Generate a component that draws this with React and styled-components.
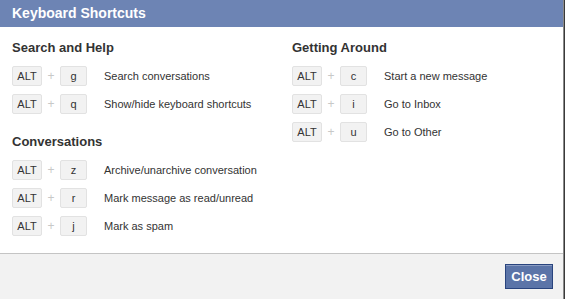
import React from "react";
import styled, { createGlobalStyle } from "styled-components";

const Global = createGlobalStyle`
  html, body { margin: 0; padding: 0; background: #3a3a3a; }
  body { font-family: "Liberation Sans", Arial, sans-serif; }
`;

const Page = styled.div`
  width: 565px;
  height: 299px;
  display: flex;
  overflow: hidden;
`;

const Dialog = styled.div`
  width: 563px;
  height: 299px;
  background: #fff;
  border-right: 1px solid #8a8a8a;
  display: flex;
  flex-direction: column;
`;

const Header = styled.div`
  height: 27px;
  flex: none;
  background: #6d84b4;
  color: #fff;
  font-weight: bold;
  font-size: 14px;
  line-height: 27px;
  padding-left: 12px;
`;

const Body = styled.div`
  flex: 1;
  display: grid;
  grid-template-columns: 280px 1fr;
  padding: 12px 12px 0 12px;
  border-bottom: 1px solid #c4c4c4;
`;

const Column = styled.div`
  display: flex;
  flex-direction: column;
`;

const Heading = styled.div`
  font-size: 13px;
  font-weight: bold;
  color: #333;
  line-height: 18px;
  margin-top: ${(p) => (p.$first ? "0" : "19px")};
  margin-bottom: 9px;
`;

const Rows = styled.div`
  display: flex;
  flex-direction: column;
  gap: 8px;
`;

const Row = styled.div`
  display: flex;
  align-items: center;
  height: 20px;
`;

const Key = styled.span`
  box-sizing: border-box;
  width: ${(p) => p.$w}px;
  height: 20px;
  background: #f2f2f2;
  border: 1px solid #e2e2e2;
  border-radius: 2px;
  font-size: 11px;
  color: #333;
  display: flex;
  align-items: center;
  justify-content: center;
`;

const Plus = styled.span`
  width: 18px;
  text-align: center;
  color: #c8c8c8;
  font-size: 12px;
`;

const Desc = styled.span`
  margin-left: 17px;
  font-size: 11px;
  color: #333;
`;

const Footer = styled.div`
  height: 45px;
  flex: none;
  background: #f2f2f2;
  display: flex;
  justify-content: flex-end;
  align-items: flex-start;
  padding: 10px 10px 0 0;
  box-sizing: border-box;
`;

const Button = styled.button`
  box-sizing: border-box;
  height: 25px;
  width: 48px;
  background: #5b74a8;
  border: 1px solid #29447e;
  color: #fff;
  font-family: "Liberation Sans", Arial, sans-serif;
  font-weight: bold;
  font-size: 13px;
  padding: 0;
  box-shadow: inset 0 1px 0 #8a9cc2;
`;

const Shortcut = ({ k, d }) => (
  <Row>
    <Key $w={30}>ALT</Key>
    <Plus>+</Plus>
    <Key $w={27}>{k}</Key>
    <Desc>{d}</Desc>
  </Row>
);

export default function App() {
  return (
    <Page>
      <Global />
      <Dialog>
        <Header>Keyboard Shortcuts</Header>
        <Body>
          <Column>
            <Heading $first>Search and Help</Heading>
            <Rows>
              <Shortcut k="g" d="Search conversations" />
              <Shortcut k="q" d="Show/hide keyboard shortcuts" />
            </Rows>
            <Heading>Conversations</Heading>
            <Rows>
              <Shortcut k="z" d="Archive/unarchive conversation" />
              <Shortcut k="r" d="Mark message as read/unread" />
              <Shortcut k="j" d="Mark as spam" />
            </Rows>
          </Column>
          <Column>
            <Heading $first>Getting Around</Heading>
            <Rows>
              <Shortcut k="c" d="Start a new message" />
              <Shortcut k="i" d="Go to Inbox" />
              <Shortcut k="u" d="Go to Other" />
            </Rows>
          </Column>
        </Body>
        <Footer>
          <Button>Close</Button>
        </Footer>
      </Dialog>
    </Page>
  );
}
